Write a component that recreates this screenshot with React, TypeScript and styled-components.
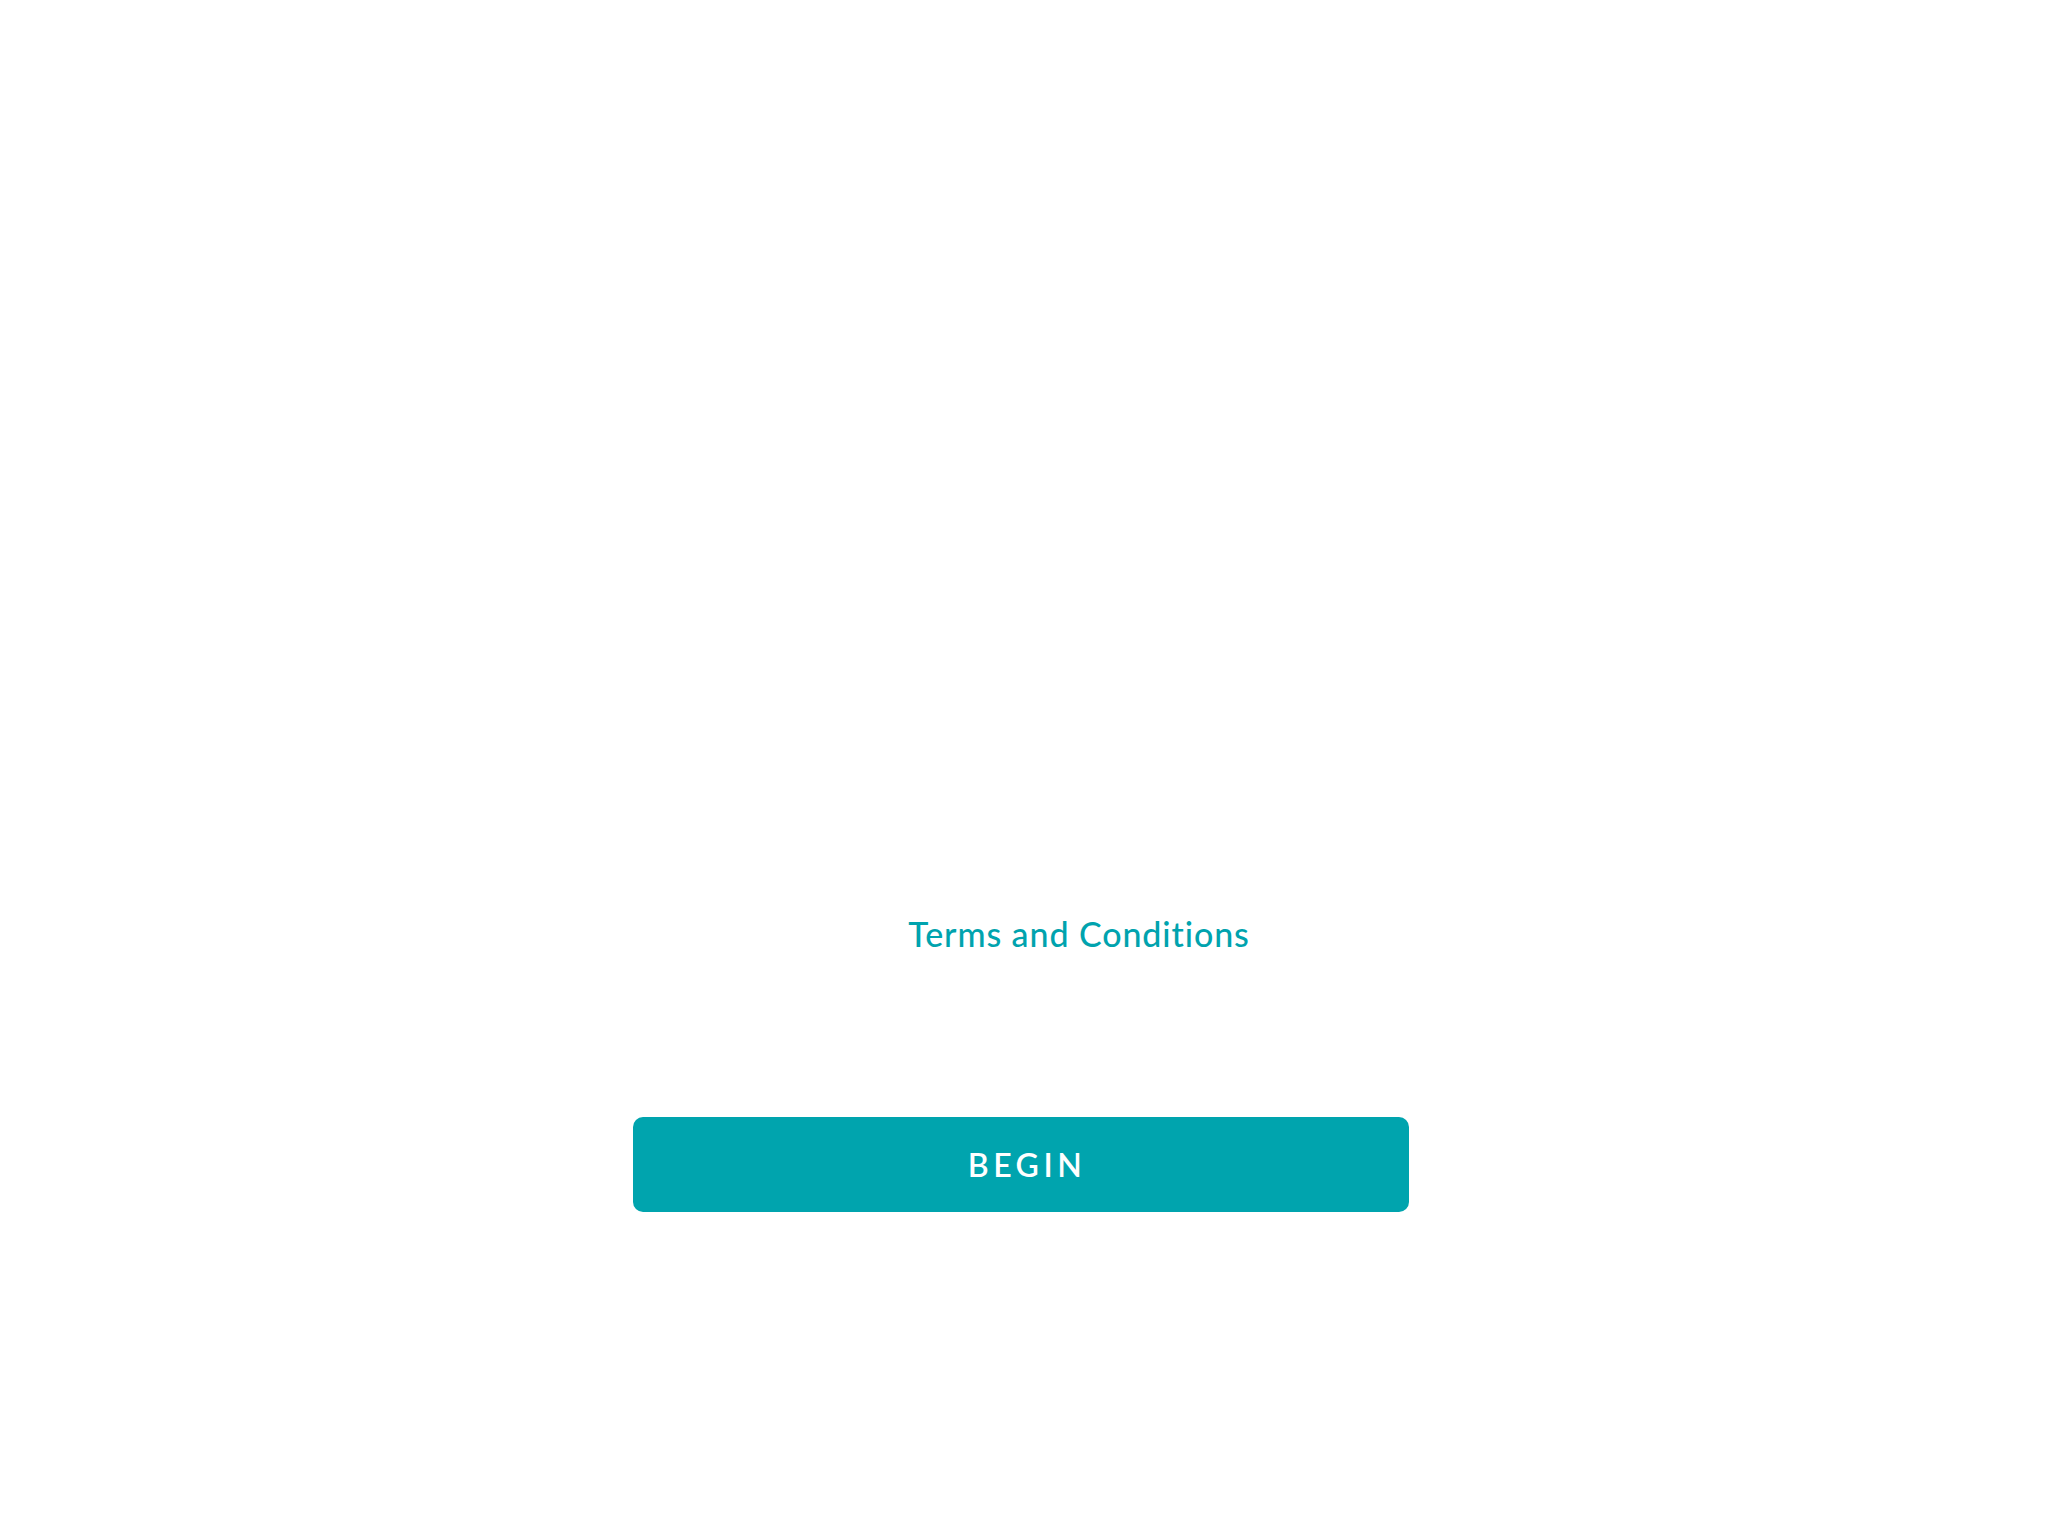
import React from "react";
import styled, { createGlobalStyle } from "styled-components";

const GlobalStyle = createGlobalStyle`
  html, body {
    margin: 0;
    padding: 0;
    background: #ffffff;
  }
  body {
    font-family: Lato, "Open Sans", sans-serif;
  }
`;

const Page = styled.main`
  width: 2048px;
  height: 1536px;
  display: flex;
  flex-direction: column;
  align-items: flex-start;
  padding-top: 912px;
  box-sizing: border-box;
`;

const TermsRow = styled.div`
  width: 2048px;
  display: flex;
  justify-content: center;
  padding-left: 110px;
  box-sizing: border-box;
`;

const TermsLink = styled.a`
  color: #00a3ae;
  font-family: Lato, "Open Sans", sans-serif;
  font-size: 34px;
  font-weight: 500;
  line-height: 44px;
  letter-spacing: 0.9px;
  text-decoration: none;
  cursor: pointer;
`;

const ButtonRow = styled.div`
  margin-top: 161px;
  padding-left: 633px;
`;

const BeginButton = styled.button`
  width: 776px;
  height: 95px;
  border: none;
  border-radius: 10px;
  background: #00a4ae;
  color: #ffffff;
  font-family: Lato, "Open Sans", sans-serif;
  font-size: 32px;
  font-weight: 600;
  letter-spacing: 4.5px;
  padding: 0 0 0 12px;
  cursor: pointer;
`;

export default function App() {
  return (
    <>
      <GlobalStyle />
      <Page>
        <TermsRow>
          <TermsLink>Terms and Conditions</TermsLink>
        </TermsRow>
        <ButtonRow>
          <BeginButton>BEGIN</BeginButton>
        </ButtonRow>
      </Page>
    </>
  );
}
